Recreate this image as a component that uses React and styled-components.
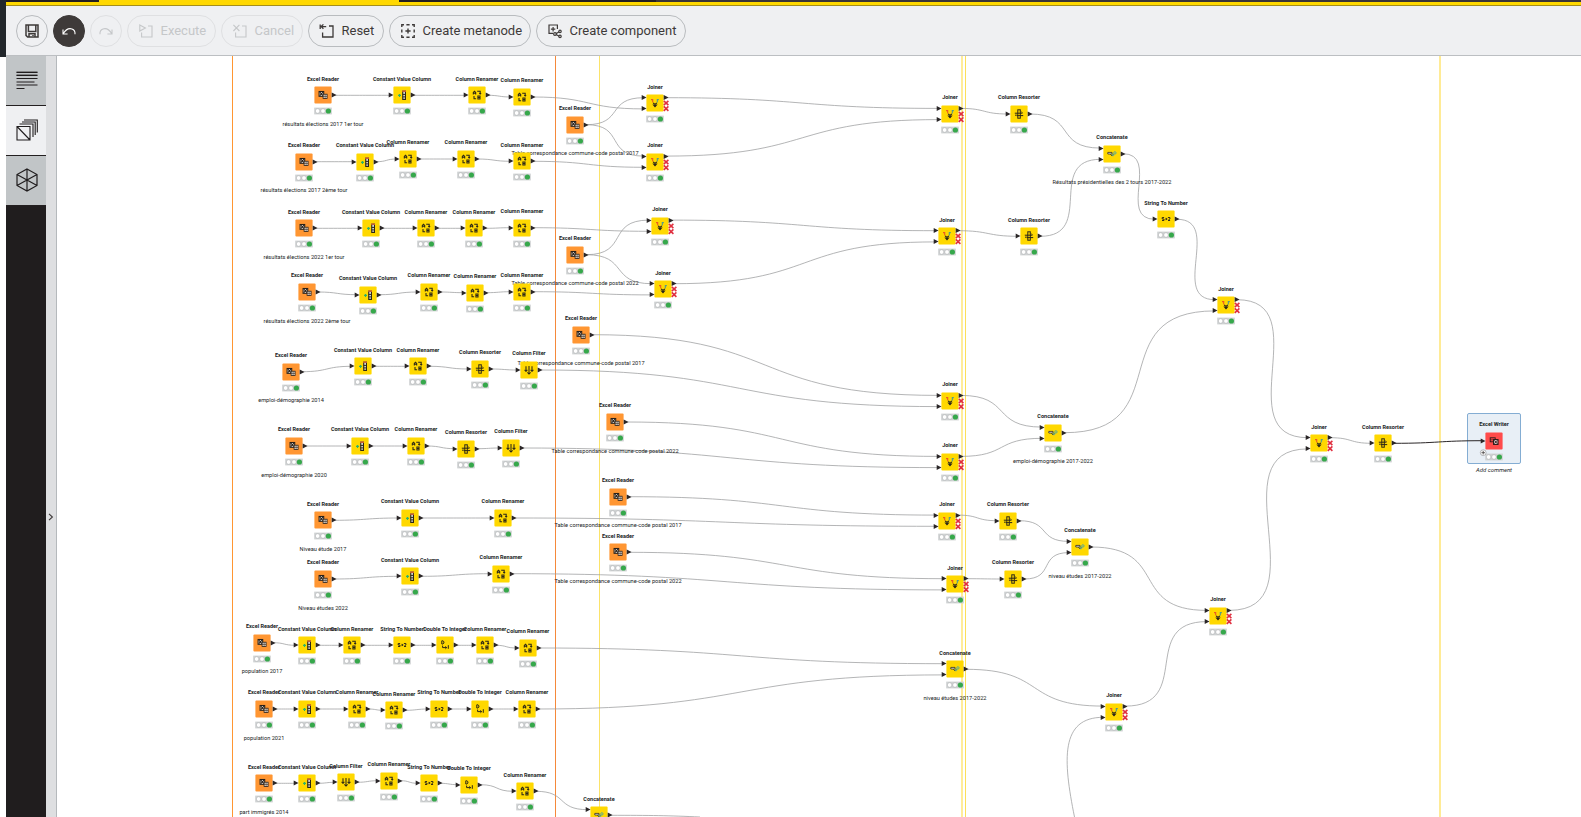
import React from 'react';
import styled, { createGlobalStyle, css } from 'styled-components';

const GlobalStyle = createGlobalStyle`
  * { box-sizing: border-box; }
  body { margin: 0; background: #fff; overflow: hidden; font-family: Roboto, "Liberation Sans", sans-serif; }
`;

/* ---------- frame ---------- */

const Page = styled.div`
  display: flex;
  width: 1581px;
  height: 817px;
  overflow: hidden;
`;
const WindowEdge = styled.div`
  width: 6px;
  height: 57px;
  background: #22272b;
`;
const Main = styled.div`
  flex: 1;
  display: flex;
  flex-direction: column;
  min-width: 0;
`;
const TabStrip = styled.div`
  display: flex;
  height: 2px;
  background: #231f20;
`;
const StripPart = styled.div`
  width: ${(p) => p.$w}px;
  background: ${(p) => p.$bg};
`;
const AccentBar = styled.div`
  height: 4px;
  background: #ffd800;
  border-bottom: 1px solid #a48e1c;
`;
const Toolbar = styled.div`
  display: flex;
  align-items: center;
  gap: 5px;
  height: 50px;
  padding-left: 10px;
  background: #eff0f2;
  border-bottom: 1px solid #bcbfc2;
`;
const ToolButton = styled.button`
  display: flex;
  align-items: center;
  flex: none;
  height: 32px;
  width: ${(p) => p.$w}px;
  padding: 0 0 0 ${(p) => (p.$round ? 0 : 9.5)}px;
  justify-content: ${(p) => (p.$round ? 'center' : 'flex-start')};
  gap: 7px;
  border: 1px solid #b9bcbf;
  border-radius: 16px;
  background: transparent;
  color: #3e3a39;
  font: 400 13px/16px Roboto, "Liberation Sans", sans-serif;
  white-space: nowrap;
  ${(p) => p.$disabled && css`border-color: #dfe0e2; color: #c5c7c9;`}
  ${(p) => p.$dark && css`background: #3e3a39; border-color: #3e3a39; color: #fff;`}
`;
const Body = styled.div`
  flex: 1;
  display: flex;
  min-height: 0;
`;
const SideBar = styled.nav`
  width: 40px;
  background: #201d1e;
`;
const SideTab = styled.div`
  display: flex;
  align-items: center;
  justify-content: center;
  height: ${(p) => p.$h}px;
  padding: 0 0 2px 1px;
  background: ${(p) => (p.$active ? '#eff0f2' : '#c1c5c7')};
  border-bottom: 1px solid #231f20;
`;
const Expander = styled.div`
  display: flex;
  align-items: center;
  justify-content: center;
  width: 11px;
  padding-top: 160px;
  background: #dedfe1;
  border-right: 1px solid #b5b9bc;
`;
const Canvas = styled.main`
  position: relative;
  flex: 1;
  overflow: hidden;
  background: #fff;
`;

/* ---------- workflow ---------- */

const OX = 57;
const OY = 56;

const Boundary = styled.div.attrs((p) => ({ style: { left: p.$x - OX } }))`
  position: absolute;
  top: 0;
  bottom: 0;
  width: ${(p) => p.$w}px;
  background: ${(p) => p.$color};
`;
const Wires = styled.svg`
  position: absolute;
  left: 0;
  top: 0;
`;
const NodeAnchor = styled.div.attrs((p) => ({ style: { left: p.$x - OX, top: p.$y - OY } }))`
  position: absolute;
  width: 0;
  height: 0;
`;
const Glyph = styled.svg`
  position: absolute;
  left: -16px;
  top: -10px;
`;
const Caption = styled.div`
  position: absolute;
  left: -80px;
  top: ${(p) => p.$dy - 5}px;
  width: 160px;
  text-align: center;
  white-space: nowrap;
  line-height: 10px;
  font-size: 6.2px;
  font-weight: ${(p) => (p.$bold ? 700 : 400)};
  font-style: ${(p) => (p.$italic ? 'italic' : 'normal')};
  color: #201d1e;
  transform: scaleX(${(p) => p.$stretch});
`;
const Selection = styled.div`
  position: absolute;
  left: -27px;
  top: -28px;
  width: 54px;
  height: 51px;
  background: #e8eff6;
  border: 1px solid #84add3;
  border-radius: 2px;
`;

const R = 'Excel Reader', V = 'Constant Value Column', N = 'Column Renamer', S = 'Column Resorter',
  F = 'Column Filter', T = 'String To Number', D = 'Double To Integer', J = 'Joiner', C = 'Concatenate';

const rows = [
  ['résultats élections 2017 1er tour', [R, 322.7, 95.3], [V, 402.3, 95.3], [N, 476.7, 95.3], [N, 522, 97]],
  ['résultats élections 2017 2ème tour', [R, 304.3, 161.7], [V, 365.3, 161.7], [N, 407.7, 159], [N, 466, 159], [N, 522, 161.3]],
  ['résultats élections 2022 1er tour', [R, 304.3, 228.3], [V, 370.7, 228.3], [N, 426.3, 228.3], [N, 474.3, 228.3], [N, 521.7, 227.7]],
  ['résultats élections 2022 2ème tour', [R, 306.7, 292], [V, 368, 294.7], [N, 429, 292], [N, 475, 292.7], [N, 522, 291.7]],
  ['emploi-démographie 2014', [R, 291, 371.7], [V, 362.7, 366.3], [N, 418.3, 366.3], [S, 479.7, 369], [F, 529, 370]],
  ['emploi-démographie 2020', [R, 293.7, 446], [V, 360, 446], [N, 415.7, 446], [S, 466.3, 448.7], [F, 510.7, 448]],
  ['Niveau étude 2017', [R, 322.7, 520.3], [V, 410.3, 518], [N, 503.3, 518]],
  ['Niveau études 2022', [R, 322.7, 579], [V, 410.3, 576.3], [N, 500.7, 573.7]],
  ['population 2017', [R, 261.7, 642.7], [V, 306.7, 645.3], [N, 352, 645.3], [T, 402.3, 645.3], [D, 445, 645.3], [N, 484.7, 645.3], [N, 527.7, 648]],
  ['population 2021', [R, 264.3, 709], [V, 306.7, 709], [N, 357.3, 709], [N, 394.3, 710.3], [T, 439.3, 709], [D, 480, 709], [N, 527.3, 709]],
  ['part immigrés 2014', [R, 264.3, 783.3], [V, 306.7, 783.3], [F, 346, 782.3], [N, 389.3, 780.7], [T, 429, 783.3], [D, 469, 784.7], [N, 524.7, 791.3]],
];

const T17 = 'Table correspondance commune-code postal 2017';
const T22 = 'Table correspondance commune-code postal 2022';

const hubs = {
  e1: [R, 575.3, 124.7, T17], e2: [R, 575.3, 254.7, T22], e3: [R, 580.7, 334.7, T17],
  e4: [R, 615, 422, T22], e5: [R, 617.7, 496.7, T17], e6: [R, 617.7, 552.3, T22],
  j1: [J, 654.7, 103.3], j2: [J, 654.7, 161.7], j3: [J, 660, 225.7], j4: [J, 662.7, 289.3],
  k1: [J, 949.7, 114], k2: [J, 947, 236.3], k3: [J, 949.7, 401], k4: [J, 949.7, 462],
  k5: [J, 947, 520.7], k6: [J, 955, 584.3],
  s1: [S, 1018.7, 114], s2: [S, 1029.3, 236.3], s3: [S, 1008, 520.7], s4: [S, 1013.3, 579],
  c1: [C, 1111.7, 153.7, 'Résultats présidentielles des 2 tours 2017-2022'],
  c2: [C, 1053.3, 432.7, 'emploi-démographie 2017-2022'],
  c3: [C, 1080, 547, 'niveau études 2017-2022'],
  c4: [C, 955, 669.3, 'niveau études 2017-2022'],
  c5: [C, 599, 815.3],
  t1: [T, 1166, 219.3],
  m1: [J, 1226, 305.3], m2: [J, 1218, 616], m3: [J, 1114.3, 711.7], m4: [J, 1319, 443.3],
  s5: [S, 1382.7, 443.3],
  w: ['Excel Writer', 1494, 440.7],
};

/* [from, to, input slot]; numbers refer to the last node of a row */
const links = [
  ['e1', 'j1', 0], [0, 'j1', 1], ['e1', 'j2', 0], [1, 'j2', 1],
  ['e2', 'j3', 0], [2, 'j3', 1], ['e2', 'j4', 0], [3, 'j4', 1],
  ['j1', 'k1', 0], ['j2', 'k1', 1], ['j3', 'k2', 0], ['j4', 'k2', 1],
  ['e3', 'k3', 0], [4, 'k3', 1], ['e4', 'k4', 0], [5, 'k4', 1],
  ['e5', 'k5', 0], [6, 'k5', 1], ['e6', 'k6', 0], [7, 'k6', 1],
  ['k1', 's1'], ['k2', 's2'], ['k5', 's3'], ['k6', 's4'],
  ['s1', 'c1', 0], ['s2', 'c1', 1], ['c1', 't1'], ['t1', 'm1', 0],
  ['k3', 'c2', 0], ['k4', 'c2', 1], ['c2', 'm1', 1],
  ['s3', 'c3', 0], ['s4', 'c3', 1], ['c3', 'm2', 0],
  [8, 'c4', 0], [9, 'c4', 1], ['c4', 'm3', 0], ['m3', 'm2', 1],
  ['m1', 'm4', 0], ['m2', 'm4', 1], ['m4', 's5'], [10, 'c5', 0],
];

const twoInputs = (kind) => kind === J || kind === C;
const outPoint = ([kind, x, y]) => [x + 11, kind === J ? y - 5.6 : y];
const inPoint = ([kind, x, y], slot = 0) => [x - 11, twoInputs(kind) ? y + (slot ? 5.6 : -5.6) : y];

function curve(a, b, slot) {
  const [x1, y1] = outPoint(a);
  const [x2, y2] = inPoint(b, slot);
  const bend = Math.abs(x2 - x1) / 2 + Math.abs(y2 - y1) / 3;
  return `M${x1},${y1} C${x1 + bend},${y1} ${x2 - bend},${y2} ${x2},${y2}`;
}

const nodeOf = (ref) => (typeof ref === 'number' ? rows[ref][rows[ref].length - 1] : hubs[ref]);

function Picture({ kind }) {
  const k = '#2b2718';
  switch (kind) {
    case R:
      return (
        <g>
          <rect x="-3.9" y="-3.5" width="4.6" height="4.8" fill="#fff" stroke="#2a2018" strokeWidth="1.1" />
          <path d="M-3.2,-2.8 L0,0.6 M0,-2.8 L-3.2,0.6" stroke="#2a2018" strokeWidth="1.1" />
          <rect x="0.1" y="-0.8" width="4" height="4.3" fill="#f4ece4" stroke="#2a2018" strokeWidth="0.8" />
          <path d="M2.1,-0.8 V3.5 M0.1,1.4 H4.1" stroke="#2a2018" strokeWidth="0.6" />
        </g>
      );
    case 'Excel Writer':
      return (
        <g>
          <rect x="-3.8" y="-3.2" width="5" height="4" fill="none" stroke="#2a1818" strokeWidth="0.9" />
          <path d="M-3.8,-1.2 H1" stroke="#2a1818" strokeWidth="0.6" />
          <rect x="-0.4" y="-1.4" width="4.4" height="4.8" fill="#f3d9d9" stroke="#2a1818" strokeWidth="1.1" />
          <path d="M0.4,-0.6 L3.2,2.6 M3.2,-0.6 L0.4,2.6" stroke="#2a1818" strokeWidth="0.9" />
        </g>
      );
    case V:
      return (
        <g>
          <path d="M-4,0.4 H-1 M-2.5,-1.1 V1.9" stroke="#2db36a" strokeWidth="1.1" />
          <rect x="0.8" y="-3.8" width="2.6" height="8.2" fill="#fff" stroke={k} strokeWidth="1.2" />
          <rect x="0.2" y="-4.5" width="3.8" height="1.3" fill="#e2683c" />
          <path d="M0.6,-0.6 H3.5 M0.6,1.9 H3.5" stroke={k} strokeWidth="1" />
        </g>
      );
    case N:
      return (
        <g fill="none" stroke={k} strokeWidth="1.05">
          <path d="M-3.7,-0.6 V-2.5 L-2.5,-3.7 L-1.3,-2.5 V-0.6 M-3.6,-1.7 H-1.4" />
          <path d="M0.2,-3.8 H3.2 V-1.4 M2.2,-1.9 L3.2,-0.9 L4.1,-1.9" />
          <path d="M-3,1 V3.8 H-0.9" />
          <path d="M0.9,1 H3 V3.9 H0.9 Z M0.9,2.4 H3" />
        </g>
      );
    case S:
      return (
        <g fill="none" stroke={k} strokeWidth="1">
          <rect x="-1.2" y="-4.2" width="2.5" height="8.4" />
          <path d="M-4.2,-0.8 H3 M-2.6,1.6 H4.2 M2.4,-2.1 L3.8,-0.8 M-2.6,0.4 L-4,1.6" />
        </g>
      );
    case F:
      return (
        <g fill="none" stroke={k} strokeWidth="1.05">
          <path d="M-3,-3.8 V1.2 M0,-4 V4 M3,-3.8 V1.2" />
          <path d="M-1.6,2.4 L0,4 L1.6,2.4 M-4.4,-0.2 L-3,1.2 L-1.6,-0.2 M4.4,-0.2 L3,1.2 L1.6,-0.2" />
        </g>
      );
    case T:
      return (
        <g fill="none" stroke={k} strokeWidth="0.95">
          <path d="M-1.9,-1.5 H-3.8 V0 H-2 V1.5 H-4 M-0.9,0 H0.9 M0.2,-1.1 L1.1,0 L0.2,1.1 M1.9,-1.5 H3.9 V0 L2,1.5 H4.1" />
        </g>
      );
    case D:
      return (
        <g fill="none" stroke={k} strokeWidth="1">
          <path d="M-3.2,-4.2 V-1 H-2.1 L-1.1,-1.9 V-3.3 L-2.1,-4.2 Z" />
          <path d="M-2.4,0.6 V2.6 H1.6 M0.4,1.4 L1.7,2.6 L0.4,3.8 M3.3,0.2 V3.8" />
        </g>
      );
    case J:
      return (
        <g fill="none">
          <path d="M-4,-3.4 H-2.3 V-0.4" stroke="#ea5a22" strokeWidth="1.1" />
          <path d="M3.8,-3.4 H2.3 V-0.4" stroke="#4f9a8c" strokeWidth="1.1" />
          <path d="M-1.9,0 L-0.6,0.8 M1.9,0 L0.6,0.8 M0,0.4 V3.4" stroke={k} strokeWidth="1.1" />
          <path d="M-2.6,1.6 H2.6 L0,4.5 Z" fill={k} />
        </g>
      );
    default:
      return (
        <g fill="none">
          <path d="M-4.2,-1.6 H0 V0 H-4.2 Z" fill="#fff" stroke={k} strokeWidth="0.8" />
          <path d="M-1.6,0.4 L-0.2,1.8 L1.4,0.2" stroke={k} strokeWidth="0.8" />
          <circle cx="2.9" cy="-1.1" r="1.2" stroke="#3a9fb0" strokeWidth="0.8" />
          <circle cx="0.9" cy="0.9" r="1" stroke="#3a9fb0" strokeWidth="0.7" />
        </g>
      );
  }
}

const arrow = (x, y) => `M${x},${y - 2.5} L${x + 4.8},${y} L${x},${y + 2.5} Z`;

function WorkflowNode({ data }) {
  const [kind, x, y, comment] = data;
  const reader = kind === R;
  const writer = kind === 'Excel Writer';
  const fill = reader ? '#ff9632' : writer ? '#ff4b4b' : '#ffd800';
  return (
    <NodeAnchor $x={x} $y={y}>
      {writer && <Selection />}
      {comment && <Caption $dy={28.8} $stretch={0.91}>{comment}</Caption>}
      <Glyph width="32" height="31" viewBox="-16 -10 32 31">
        <rect x="-8.6" y="-8.5" width="17.2" height="17" rx="1" fill={fill} />
        <Picture kind={kind} />
        {!writer && <path d={arrow(8.7, kind === J ? -5.6 : 0)} fill="#2a2627" />}
        {!reader && !twoInputs(kind) && <path d={arrow(-13.3, 0)} fill="#2a2627" />}
        {twoInputs(kind) && <path d={`${arrow(-13.3, -5.6)} ${arrow(-13.3, 5.6)}`} fill="#2a2627" />}
        {kind === J && (
          <path
            d="M8.8,-2.2 L13.4,2.2 M13.4,-2.2 L8.8,2.2 M8.8,3.4 L13.4,7.8 M13.4,3.4 L8.8,7.8"
            stroke="#e03040"
            strokeWidth="1.6"
          />
        )}
        <rect x="-8.8" y="12.6" width="17.6" height="6.8" fill="#cfd2d3" />
        <circle cx="-5.4" cy="16" r="2.3" fill="#fff" stroke="#a9abac" strokeWidth="0.5" />
        <circle cx="0" cy="16" r="2.3" fill="#fff" stroke="#a9abac" strokeWidth="0.5" />
        <circle cx="5.4" cy="16" r="2.6" fill="#36a84b" />
        {writer && (
          <g>
            <circle cx="-10.8" cy="11.7" r="2.9" fill="#fff" stroke="#8a8c8e" strokeWidth="0.6" />
            <path d="M-12.6,11.7 H-9 M-10.8,9.9 V13.5" stroke="#3e3a39" strokeWidth="0.8" />
          </g>
        )}
      </Glyph>
      <Caption $bold $dy={-16.8} $stretch={0.89}>{kind}</Caption>
      {writer && <Caption $italic $dy={29.4} $stretch={0.95}>Add comment</Caption>}
    </NodeAnchor>
  );
}

/* ---------- toolbar icons ---------- */

const Ico = ({ children, size = 16, w = 1.1 }) => (
  <svg width={size} height={size} viewBox="0 0 16 16" fill="none" stroke="currentColor" strokeWidth={w}>{children}</svg>
);
const Corner = () => <path d="M10,3 H14 V14 H3.6 V9.4" />;

export default function App() {
  const rowNodes = rows.flatMap(([comment, ...nodes]) => nodes.map((n, i) => (i ? n : [...n, comment])));
  const rowCurves = rows.flatMap(([, ...nodes]) => nodes.slice(1).map((n, i) => curve(nodes[i], n)));
  return (
    <Page>
      <GlobalStyle />
      <WindowEdge />
      <Main>
        <TabStrip>
          <StripPart $w={93} $bg="#231f20" />
          <StripPart $w={300} $bg="#ffd800" />
          <StripPart $w={257} $bg="#231f20" />
          <StripPart $w={925} $bg="#3a3536" />
        </TabStrip>
        <AccentBar />
        <Toolbar>
          <ToolButton $w={32} $round>
            <Ico w={1.5}><path d="M2,2 H14 V14 H3.6 L2,12.4 Z M4.4,2 V8.4 H11.8 V2 M5,14 V10.8 H11 V14 M9,12 V13" /></Ico>
          </ToolButton>
          <ToolButton $w={32} $round $dark>
            <Ico><path d="M2,6.4 V11 H6.6 M2.2,10.8 C4.5,7 8,5 11,6 C13.4,6.8 14.2,9 14,11.2" /></Ico>
          </ToolButton>
          <ToolButton $w={32} $round $disabled>
            <Ico><path d="M14,6.4 V11 H9.4 M13.8,10.8 C11.5,7 8,5 5,6 C2.6,6.8 1.8,9 2,11.2" /></Ico>
          </ToolButton>
          <ToolButton $w={89} $disabled>
            <Ico><path d="M1.8,2 L7.4,5 L1.8,8 Z" /><Corner /></Ico>Execute
          </ToolButton>
          <ToolButton $w={82} $disabled>
            <Ico><path d="M1.4,1.8 L7.4,8 M7.4,1.8 L1.4,8" /><Corner /></Ico>Cancel
          </ToolButton>
          <ToolButton $w={76}>
            <Ico w={1.3}><path d="M1.2,1.4 V6 M4.4,1.4 L2.2,3.6 L4.4,5.8 M2.2,3.6 H7.2" /><Corner /></Ico>Reset
          </ToolButton>
          <ToolButton $w={142}>
            <Ico w={1.4}>
              <path d="M1.8,4 V1.8 H4 M6.4,1.8 H9.6 M12,1.8 H14.2 V4 M14.2,6.4 V9.6 M14.2,12 V14.2 H12 M9.6,14.2 H6.4 M4,14.2 H1.8 V12 M1.8,9.6 V6.4 M8,5.4 V10.6 M5.4,8 H10.6" />
            </Ico>
            Create metanode
          </ToolButton>
          <ToolButton $w={150}>
            <Ico w={1.2}>
              <path d="M10.4,6 V2 H2 V10.4 H6 M6.1,4 V8.4 M3.9,6.2 H8.3 M9,10.8 L12.2,8.8 M9,11.4 L12.2,13.2" />
              <circle cx="8" cy="11" r="1.4" /><circle cx="13" cy="8.4" r="1.2" /><circle cx="13" cy="13.4" r="1.2" />
            </Ico>
            Create component
          </ToolButton>
        </Toolbar>
        <Body>
          <SideBar>
            <SideTab $h={50}>
              <svg width="22" height="20" viewBox="0 0 22 20" stroke="#201d1e" strokeWidth="1">
                <path d="M0.5,2.5 H21.5 M0.5,5.5 H21.5 M0.5,8.5 H21.5 M0.5,12 H18.5 M0.5,15 H21.5 M0.5,18.5 H8.5" />
                <path d="M0.5,2 H21.5 M0.5,5 H21.5" strokeWidth="2" strokeOpacity="0.4" />
              </svg>
            </SideTab>
            <SideTab $h={50} $active>
              <svg width="22" height="22" viewBox="0 0 22 22" fill="none" stroke="#201d1e" strokeWidth="1.1">
                <path d="M1,7.5 H14 V21 H1 Z M1,7.5 L14,21 M3.5,5 H17 V18 M6,3 H19.2 V16 M8,1 H21.3 V13.5" />
              </svg>
            </SideTab>
            <SideTab $h={50}>
              <svg width="22" height="24" viewBox="0 0 22 24" fill="none" stroke="#201d1e" strokeWidth="1.2">
                <path d="M11,1 L21,6.5 V17.5 L11,23 L1,17.5 V6.5 Z M11,1 V23 M1,6.5 L21,17.5 M21,6.5 L1,17.5" />
              </svg>
            </SideTab>
          </SideBar>
          <Expander>
            <svg width="6" height="8" viewBox="0 0 6 8" fill="none" stroke="#3e3a39" strokeWidth="1.1"><path d="M1,0.8 L4.4,4 L1,7.2" /></svg>
          </Expander>
          <Canvas>
            <Boundary $x={232} $w={1} $color="#ff9632" />
            <Boundary $x={555} $w={1} $color="#f5893a" />
            <Boundary $x={599} $w={1} $color="#fbe36a" />
            <Boundary $x={961} $w={2} $color="#ffec9a" />
            <Boundary $x={965} $w={1} $color="#fbe05a" />
            <Boundary $x={1439} $w={2} $color="#ffeb96" />
            <Wires width="1524" height="761" viewBox={`${OX} ${OY} 1524 761`} fill="none" stroke="#9b9c9d" strokeWidth="0.75">
              {rowCurves.map((d, i) => <path key={i} d={d} />)}
              {links.map(([a, b, slot], i) => <path key={i} d={curve(nodeOf(a), nodeOf(b), slot)} />)}
              <path d="M610,815.3 C650,815.3 670,815.6 700,817" />
              <path d="M1103.3,717.3 C1060,717.3 1063,760 1074.5,817" />
            </Wires>
            {Object.entries(hubs).filter(([id]) => id !== 'w').map(([id, n]) => <WorkflowNode key={id} data={n} />)}
            {rowNodes.map((n, i) => <WorkflowNode key={i} data={n} />)}
            <WorkflowNode data={hubs.w} />
            <Wires width="1524" height="761" viewBox={`${OX} ${OY} 1524 761`} fill="none" stroke="#2a2627" strokeWidth="1">
              <path d={curve(hubs.s5, hubs.w)} />
            </Wires>
          </Canvas>
        </Body>
      </Main>
    </Page>
  );
}
